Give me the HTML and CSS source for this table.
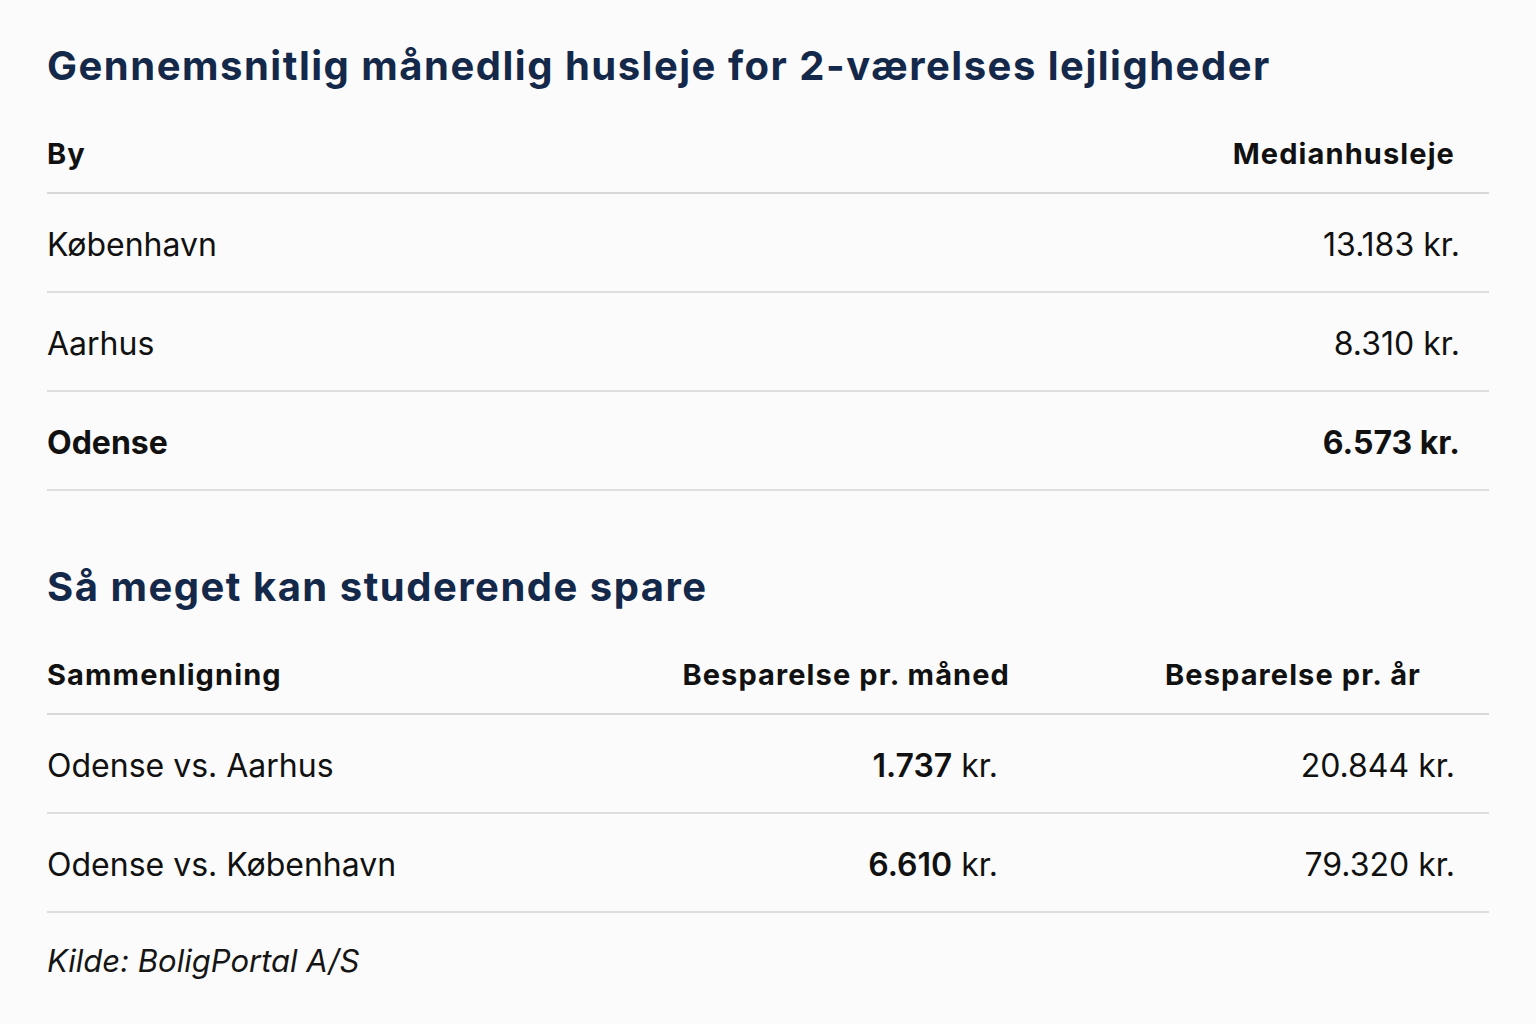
FILE: index.html
```html
<!DOCTYPE html>
<html lang="da">
<head>
<meta charset="utf-8">
<title>Husleje</title>
<link rel="stylesheet" href="styles.css">
</head>
<body>
<main class="page">
  <h1 class="title">Gennemsnitlig månedlig husleje for 2-værelses lejligheder</h1>
  <table class="tbl tbl-rent">
    <thead>
      <tr><th class="c-city">By</th><th class="c-rent">Medianhusleje</th></tr>
    </thead>
    <tbody>
      <tr><td>København</td><td class="num">13.183 kr.</td></tr>
      <tr><td>Aarhus</td><td class="num">8.310 kr.</td></tr>
      <tr class="strong"><td>Odense</td><td class="num">6.573 kr.</td></tr>
    </tbody>
  </table>

  <h2 class="title title-2">Så meget kan studerende spare</h2>
  <table class="tbl tbl-save">
    <thead>
      <tr><th class="c-cmp">Sammenligning</th><th class="c-month">Besparelse pr. måned</th><th class="c-year">Besparelse pr. år</th></tr>
    </thead>
    <tbody>
      <tr><td>Odense vs. Aarhus</td><td class="num-m"><span class="b">1.737</span> kr.</td><td class="num-y">20.844 kr.</td></tr>
      <tr><td>Odense vs. København</td><td class="num-m"><span class="b">6.610</span> kr.</td><td class="num-y">79.320 kr.</td></tr>
    </tbody>
  </table>
  <p class="source">Kilde: BoligPortal A/S</p>
</main>
</body>
</html>
```

FILE: styles.css
```css
html, body {
  margin: 0;
  padding: 0;
  background: #fbfbfb;
}
body {
  font-family: Inter, "Noto Sans", "Liberation Sans", sans-serif;
  color: #111111;
}
.page {
  padding: 43px 47px 0 47px;
}
.title {
  margin: 0;
  font-size: 40px;
  line-height: 46px;
  font-weight: 700;
  color: #14284a;
  letter-spacing: 1.5px;
}
.title-2 {
  margin-top: 73px;
}
.tbl {
  width: 100%;
  border-collapse: collapse;
  table-layout: fixed;
  margin-top: 48px;
}
.tbl th {
  font-size: 29px;
  line-height: 34px;
  font-weight: 700;
  letter-spacing: 1.1px;
  text-align: left;
  padding: 0 0 21px 0;
  border-bottom: 2px solid #d8d8d8;
}
.tbl td {
  font-size: 32px;
  line-height: 38px;
  font-weight: 400;
  padding: 32px 0 27px 0;
  border-bottom: 2px solid #dedede;
}
.tbl-rent .c-rent {
  text-align: right;
  padding-right: 34px;
}
.tbl-rent .num {
  text-align: right;
  padding-right: 29px;
}
.tbl-rent .strong td {
  font-weight: 700;
}
.tbl-save .c-cmp { width: 573px; }
.tbl-save .c-month {
  width: 390px;
  text-align: right;
  padding-right: 16px;
}
.tbl-save .c-year {
  text-align: right;
  padding-right: 68px;
}
.tbl-save .num-m {
  text-align: right;
  padding-right: 28px;
}
.tbl-save .num-y {
  text-align: right;
  padding-right: 34px;
}
.b { font-weight: 600; }
.source {
  margin: 30px 0 0 0;
  font-size: 31px;
  line-height: 36px;
  font-style: italic;
  color: #151515;
}
```
